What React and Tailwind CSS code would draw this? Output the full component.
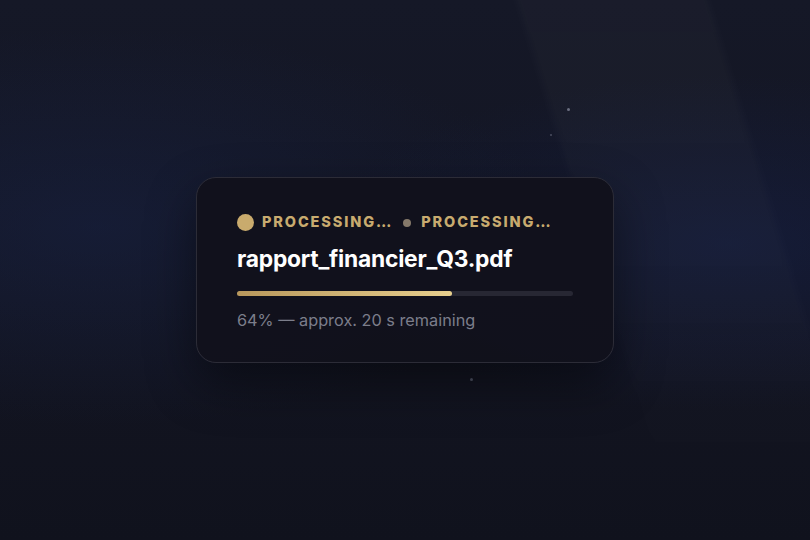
import React from "react";

const App = () => {
  return (
    <div
      className="relative w-[810px] h-[540px] overflow-hidden bg-[#121420]"
      style={{ fontFamily: "Inter, 'Noto Sans', sans-serif" }}
    >
      {/* background glows */}
      <div className="absolute inset-0 bg-[linear-gradient(180deg,#151827,#131522_55%,#10121d)]" />
      <div className="absolute inset-0 bg-[radial-gradient(ellipse_at_12%_42%,rgba(25,38,80,0.4),transparent_45%)]" />
      <div className="absolute inset-0 bg-[radial-gradient(ellipse_at_90%_45%,rgba(22,34,80,0.45),transparent_40%)]" />
      {/* light beam */}
      <div className="absolute left-[505px] top-[-40px] w-[190px] h-[520px] origin-top skew-x-[17deg] bg-[linear-gradient(180deg,rgba(255,255,255,0.025),rgba(255,255,255,0.015)_55%,transparent)] blur-[3px]" />
      {/* stars */}
      <div className="absolute left-[567px] top-[108px] w-[3px] h-[3px] rounded-full bg-[#6b6f80]" />
      <div className="absolute left-[550px] top-[134px] w-[2px] h-[2px] rounded-full bg-[#4a4e60]" />
      <div className="absolute left-[470px] top-[378px] w-[3px] h-[3px] rounded-full bg-[#4e5264]" />

      <div className="relative flex h-full items-center justify-center">
        <div className="w-[418px] h-[186px] rounded-[20px] border border-[#2c2c37] bg-[#11111b]/95 px-[40px] pt-[36px] shadow-[0_20px_50px_rgba(0,0,0,0.45)]">
          <div className="flex items-center text-[14.5px] font-extrabold tracking-[0.13em] text-[#c8ab6f] leading-none">
            <span className="w-[17px] h-[17px] rounded-full bg-[#c9ab6d] mr-[8px]" />
            <span>PROCESSING…</span>
            <span className="w-[8px] h-[8px] rounded-full bg-[#85796a] ml-[10px] mr-[10px]" />
            <span>PROCESSING…</span>
          </div>
          <div className="mt-[14px] text-[22.8px] font-bold text-white leading-[28px] tracking-[-0.01em]">
            rapport_financier_Q3.pdf
          </div>
          <div className="mt-[18px] h-[5px] w-full rounded-full bg-[#272733]">
            <div
              className="h-full rounded-full bg-[linear-gradient(90deg,#b9985c,#e7cf8d)]"
              style={{ width: "64%" }}
            />
          </div>
          <div className="mt-[14px] text-[16.3px] text-[#7c7e8b] leading-[20px]">
            64% — approx. 20 s remaining
          </div>
        </div>
      </div>
    </div>
  );
};

export default App;
